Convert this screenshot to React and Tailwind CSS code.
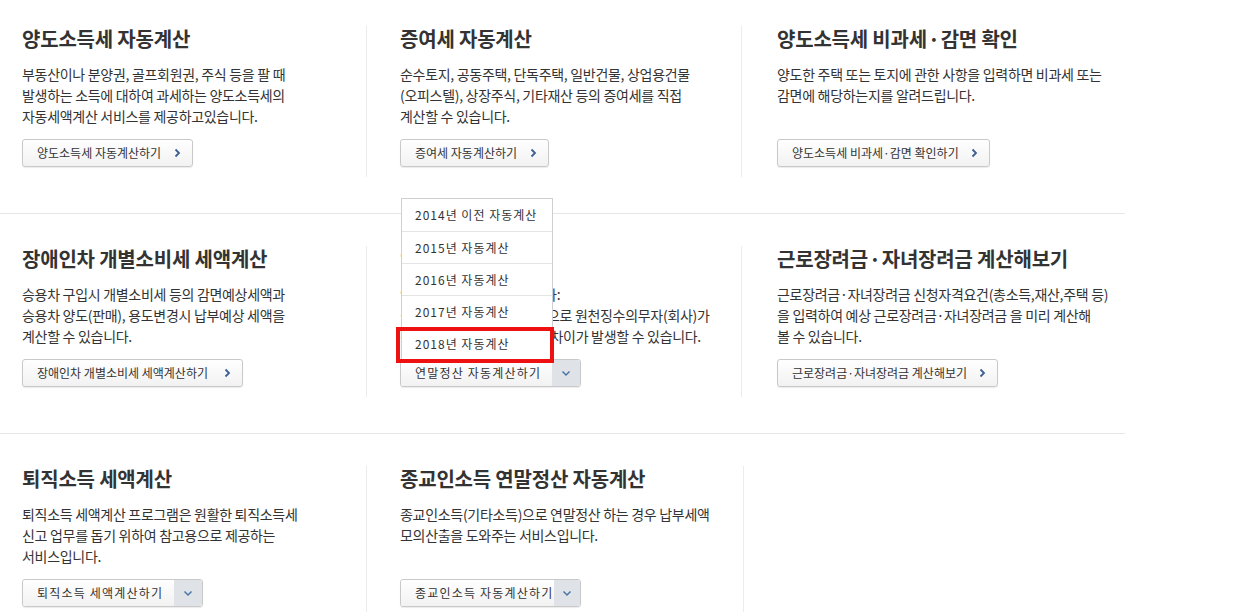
import React from "react";

const Chevron = () => (
  <svg width="7" height="10" viewBox="0 0 7 10" className="shrink-0">
    <path d="M1.5 1.5 L5 5 L1.5 8.5" fill="none" stroke="#3d5f91" strokeWidth="1.8" />
  </svg>
);

const ChevronDown = () => (
  <svg width="10" height="7" viewBox="0 0 10 7">
    <path d="M1.5 1.5 L5 5 L8.5 1.5" fill="none" stroke="#4a74a8" strokeWidth="1.5" />
  </svg>
);

// narrow middle dot for titles
const Dot = () => (
  <>
    {" "}
    <span className="inline-flex w-[5px] justify-center">·</span>{" "}
  </>
);

const LinkButton = ({ label, width }) => (
  <button
    className={`flex h-[28px] items-center justify-between rounded-[3px] border border-[#c9c9c9] bg-linear-to-b from-white to-[#f2f2f2] pl-[14px] pr-[11px] text-[12px] tracking-[0px] text-[#333] shadow-[0_1px_1px_rgba(0,0,0,0.08)] ${width}`}
  >
    <span className="whitespace-nowrap">{label}</span>
    <Chevron />
  </button>
);

const SplitButton = ({ label, width, children }) => (
  <div
    className={`relative flex h-[28px] rounded-[3px] border border-[#c9c9c9] shadow-[0_1px_1px_rgba(0,0,0,0.08)] ${width}`}
  >
    <span className="flex flex-1 items-center rounded-l-[3px] bg-linear-to-b from-white to-[#f2f2f2] pl-[14px] text-[12px] tracking-[1.2px] text-[#333] whitespace-nowrap">
      {label}
    </span>
    <span className="flex w-[28px] items-center justify-center rounded-r-[3px] bg-[#dfe3e8]">
      <ChevronDown />
    </span>
    {children}
  </div>
);

const yearItems = ["2014년 이전 자동계산", "2015년 자동계산", "2016년 자동계산", "2017년 자동계산", "2018년 자동계산"];

const YearMenu = () => (
  <div className="absolute bottom-full left-0 z-20 w-[152px] border border-[#cfcfcf] bg-white">
    {yearItems.map((item, index) => (
      <div
        key={index}
        className={`flex h-[32px] items-center pl-[13px] text-[12px] tracking-[1px] text-[#333] whitespace-nowrap ${index > 0 ? "border-t border-[#e4e4e4]" : ""}`}
      >
        {item}
      </div>
    ))}
    {/* highlight box */}
    <div className="absolute bottom-[-4px] left-[-6px] right-[-2px] h-[36px] border-4 border-[#ee1111]" />
  </div>
);

const Card = ({ title, lines, button, divider = true, pad = "pl-[22px]" }) => (
  <div className="flex w-[377px]">
    <div className={`h-[151px] w-[367px] ${pad} ${divider ? "border-r border-[#ececec]" : ""}`}>
      <h3 className="text-[20px] leading-[26px] font-bold tracking-[-0.2px] text-[#333] whitespace-nowrap">{title}</h3>
      <p className="mt-[12px] h-[63px] text-[14px] leading-[21px] tracking-[-0.3px] text-[#333] whitespace-nowrap">
        {lines.map((line, i) => (
          <React.Fragment key={i}>
            {line}
            {i < lines.length - 1 && <br />}
          </React.Fragment>
        ))}
      </p>
      <div className="mt-[12px] flex">{button}</div>
    </div>
  </div>
);

export default function App() {
  return (
    <div className="min-h-screen w-full bg-white font-['Noto_Sans_CJK_KR',sans-serif]">
      {/* Row 1 */}
      <div className="flex w-[1125px] border-b border-[#e6e6e6] pt-[26px] pb-[36px]">
        <Card
          title="양도소득세 자동계산"
          lines={["부동산이나 분양권, 골프회원권, 주식 등을 팔 때", "발생하는 소득에 대하여 과세하는 양도소득세의", "자동세액계산 서비스를 제공하고있습니다."]}
          button={<LinkButton label="양도소득세 자동계산하기" width="w-[171px]" />}
        />
        <Card
          pad="pl-[25px]"
          title="증여세 자동계산"
          lines={["순수토지, 공동주택, 단독주택, 일반건물, 상업용건물", "(오피스텔), 상장주식, 기타재산 등의 증여세를 직접", "계산할 수 있습니다."]}
          button={<LinkButton label="증여세 자동계산하기" width="w-[149px]" />}
        />
        <Card
          pad="pl-[27px]"
          divider={false}
          title={<>양도소득세 비과세<Dot />감면 확인</>}
          lines={["양도한 주택 또는 토지에 관한 사항을 입력하면 비과세 또는", "감면에 해당하는지를 알려드립니다."]}
          button={<LinkButton label="양도소득세 비과세·감면 확인하기" width="w-[213px]" />}
        />
      </div>

      {/* Row 2 */}
      <div className="flex w-[1125px] border-b border-[#e6e6e6] pt-[32px] pb-[36px]">
        <Card
          title="장애인차 개별소비세 세액계산"
          lines={["승용차 구입시 개별소비세 등의 감면예상세액과", "승용차 양도(판매), 용도변경시 납부예상 세액을", "계산할 수 있습니다."]}
          button={<LinkButton label="장애인차 개별소비세 세액계산하기" width="w-[221px]" />}
        />
        <Card
          pad="pl-[25px]"
          title="연말정산 자동계산"
          lines={["연말정산 세액을 계산합니다:", "실제 연말정산 결과는 최종으로 원천징수의무자(회사)가", "진행하므로, 계산한 결과와 차이가 발생할 수 있습니다."]}
          button={
            <SplitButton label="연말정산 자동계산하기" width="w-[181px]">
              <YearMenu />
            </SplitButton>
          }
        />
        <Card
          pad="pl-[27px]"
          divider={false}
          title={<>근로장려금<Dot />자녀장려금 계산해보기</>}
          lines={["근로장려금·자녀장려금 신청자격요건(총소득,재산,주택 등)", "을 입력하여 예상 근로장려금·자녀장려금 을 미리 계산해", "볼 수 있습니다."]}
          button={<LinkButton label="근로장려금·자녀장려금 계산해보기" width="w-[221px]" />}
        />
      </div>

      {/* Row 3 */}
      <div className="flex w-[1125px] border-b border-[#e6e6e6] pt-[32px] pb-[36px]">
        <Card
          title="퇴직소득 세액계산"
          lines={["퇴직소득 세액계산 프로그램은 원활한 퇴직소득세", "신고 업무를 돕기 위하여 참고용으로 제공하는", "서비스입니다."]}
          button={<SplitButton label="퇴직소득 세액계산하기" width="w-[181px]" />}
        />
        <Card
          pad="pl-[23px]"
          title="종교인소득 연말정산 자동계산"
          lines={["종교인소득(기타소득)으로 연말정산 하는 경우 납부세액", "모의산출을 도와주는 서비스입니다."]}
          button={<SplitButton label="종교인소득 자동계산하기" width="w-[181px]" />}
        />
      </div>
    </div>
  );
}
